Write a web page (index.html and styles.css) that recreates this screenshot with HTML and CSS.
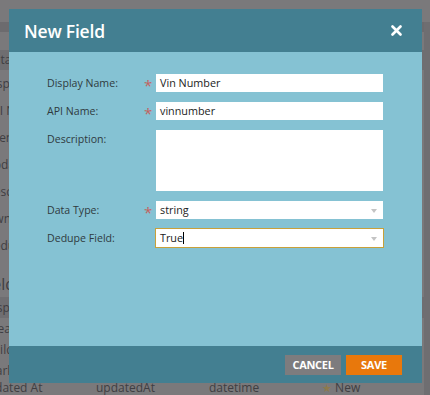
FILE: index.html
```html
<!DOCTYPE html>
<html lang="en">
<head>
    <meta charset="UTF-8">
    <title>New Field</title>
    <link rel="stylesheet" href="styles.css">
</head>
<body>
    <div class="page">
        <div class="page-top"></div>
        <div class="page-head"></div>
        <div class="page-rows">
            <div class="row dark">Data</div>
            <div class="row">Display</div>
            <div class="row">API Name</div>
            <div class="row">Friendly</div>
            <div class="row">Updated</div>
            <div class="row">Describe</div>
            <div class="row">Owner</div>
            <div class="row">Dedupe</div>
            <div class="row section">Fields</div>
            <div class="row dark small">Display</div>
            <div class="row small">Created</div>
            <div class="row small">Build</div>
            <div class="row small">Marketo</div>
        </div>
        <div class="page-last">
            <span class="c1">Updated At</span>
            <span class="c2">updatedAt</span>
            <span class="c3">datetime</span>
            <span class="c4"><span class="star">&#9733;</span> New</span>
        </div>
        <div class="scrollbar"></div>
    </div>

    <div class="modal">
        <div class="modal-header">
            <h2>New Field</h2>
            <svg class="close" width="11" height="11" viewBox="0 0 11 11">
                <path d="M1.5 1.5 L9.5 9.5 M9.5 1.5 L1.5 9.5" stroke="#fff" stroke-width="2.6" stroke-linecap="round"/>
            </svg>
        </div>
        <div class="modal-body">
            <div class="form">
                <label>Display Name:</label>
                <span class="req">*</span>
                <div class="input">Vin Number</div>

                <label>API Name:</label>
                <span class="req">*</span>
                <div class="input">vinnumber</div>

                <label>Description:</label>
                <span class="req"></span>
                <div class="input textarea"></div>

                <label>Data Type:</label>
                <span class="req">*</span>
                <div class="input select">string<i class="arrow"></i></div>

                <label>Dedupe Field:</label>
                <span class="req"></span>
                <div class="input select focus">True<span class="caret"></span><i class="arrow"></i></div>
            </div>
        </div>
        <div class="modal-footer">
            <button class="btn cancel">Cancel</button>
            <button class="btn save">Save</button>
        </div>
    </div>
</body>
</html>
```

FILE: styles.css
```css
body {
    margin: 0;
    width: 430px;
    height: 395px;
    overflow: hidden;
    background: #7a797b;
    font-family: 'Open Sans', 'Noto Sans', sans-serif;
    position: relative;
}
.page {
    color: #3f3e42;
    font-size: 12px;
}
.page-top {
    height: 22px;
}
.page-head {
    height: 10px;
    background: #6c6b6e;
    margin-right: 6px;
}
.page-rows {
    padding-top: 18px;
}
.row {
    height: 27px;
    line-height: 27px;
    text-indent: -15px;
    white-space: nowrap;
    overflow: hidden;
}
.row.dark {
    height: 20px;
    line-height: 20px;
    background: #6f6e71;
}
.row.small {
    height: 21px;
    line-height: 21px;
}
.row.section {
    font-size: 16px;
    height: 38px;
    line-height: 50px;
    text-indent: -20px;
}
.page-last {
    position: absolute;
    top: 381px;
    left: 0;
    right: 0;
    height: 14px;
    line-height: 14px;
}
.page-last span {
    position: absolute;
    white-space: nowrap;
}
.page-last .c1 { left: -21px; }
.page-last .c2 { left: 96px; }
.page-last .c3 { left: 209px; }
.page-last .c4 { left: 322px; }
.page-last .star {
    position: static;
    color: #8c7a4e;
    font-size: 11px;
}
.scrollbar {
    position: absolute;
    top: 22px;
    right: 0;
    width: 6px;
    height: 373px;
    background: #6f6e71;
}

.modal {
    position: absolute;
    top: 9px;
    left: 9px;
    width: 413px;
    height: 374px;
    display: flex;
    flex-direction: column;
}
.modal-header {
    height: 43px;
    background: #437f91;
    display: flex;
    align-items: center;
    justify-content: space-between;
    padding: 0 20px 0 15px;
}
.modal-header h2 {
    margin: 0;
    color: #fff;
    font-size: 17.5px;
    font-weight: 600;
    letter-spacing: -0.2px;
}
.modal-body {
    flex: 1;
    background: #85c2d3;
    padding: 22px 0 0 38px;
}
.form {
    display: grid;
    grid-template-columns: 99px 10px 227px;
    grid-auto-rows: auto;
    row-gap: 10px;
    align-items: start;
}
.form label {
    font-size: 10.6px;
    line-height: 18px;
    height: 18px;
    color: #2f3a3e;
}
.req {
    color: #c4635f;
    font-size: 15px;
    line-height: 18px;
    height: 18px;
    margin-left: -2px;
    padding-top: 2px;
    box-sizing: border-box;
}
.input {
    height: 18px;
    background: #fff;
    font-size: 10.8px;
    line-height: 18px;
    padding-left: 4px;
    color: #222;
    position: relative;
    box-sizing: border-box;
}
.input.textarea {
    height: 61px;
}
.input.focus {
    height: 20px;
    line-height: 18px;
    margin: -1px -1px 0 -1px;
    border: 1px solid #c8a03a;
}
.caret {
    display: inline-block;
    width: 1px;
    height: 12px;
    background: #000;
    vertical-align: -2px;
}
.arrow {
    position: absolute;
    right: 6px;
    top: 8px;
    border-left: 3.5px solid transparent;
    border-right: 3.5px solid transparent;
    border-top: 4px solid #c4c4c4;
}
.modal-footer {
    height: 37px;
    background: #437f91;
    display: flex;
    justify-content: flex-end;
    align-items: center;
    gap: 5px;
    padding-right: 20px;
}
.btn {
    border: none;
    height: 20px;
    width: 56px;
    color: #fff;
    font-family: 'Open Sans', 'Noto Sans', sans-serif;
    font-size: 11px;
    font-weight: 700;
    text-transform: uppercase;
    letter-spacing: -0.3px;
    padding: 0;
}
.btn.cancel {
    background: #7d7c7e;
}
.btn.save {
    background: #e8780c;
}
```
